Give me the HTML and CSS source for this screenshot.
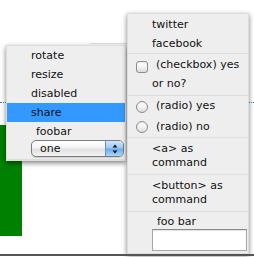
FILE: index.html
```html
<!DOCTYPE html>
<html>
<head>
<meta charset="utf-8">
<link rel="stylesheet" href="styles.css">
</head>
<body>
<div class="page">
  <div class="rule-top"></div>
  <div class="rule-dotted"></div>
  <div class="block"></div>
  <div class="rule-bottom"></div>
</div>

<ul class="menu menu-left">
  <li class="item">rotate</li>
  <li class="item">resize</li>
  <li class="item">disabled</li>
  <li class="item hover">share</li>
  <li class="item input-item sep">
    <label class="field-label">foobar</label>
    <div class="select">
      <span class="select-value">one</span>
      <span class="select-arrows">
        <svg width="6" height="10" viewBox="0 0 6 10"><path d="M3 0.5 L5.5 3.5 L0.5 3.5 Z" fill="#111"/><path d="M0.5 6.5 L5.5 6.5 L3 9.5 Z" fill="#111"/></svg>
      </span>
    </div>
  </li>
</ul>

<ul class="menu menu-right">
  <li class="item">twitter</li>
  <li class="item sep">facebook</li>
  <li class="item check-item sep"><span class="checkbox"></span>(checkbox) yes or no?</li>
  <li class="item radio-item"><span class="radio"></span>(radio) yes</li>
  <li class="item radio-item sep"><span class="radio"></span>(radio) no</li>
  <li class="item cmd-item sep">&lt;a&gt; as command</li>
  <li class="item cmd-item sep">&lt;button&gt; as command</li>
  <li class="item input-item">
    <label class="field-label">foo bar</label>
    <div class="textbox"></div>
  </li>
</ul>
</body>
</html>
```
FILE: styles.css
```css
html, body {
  margin: 0;
  padding: 0;
}
body {
  width: 254px;
  height: 257px;
  overflow: hidden;
  background: #fff;
  font-family: "DejaVu Sans", Verdana, sans-serif;
  font-size: 11px;
  color: #111;
  position: relative;
}
.page {
  display: flex;
  flex-direction: column;
  align-items: flex-start;
}
.rule-top {
  margin: 43px 0 0 90px;
  width: 40px;
  height: 1px;
  background: #e2e2e2;
}
.rule-dotted {
  margin-top: 58px;
  align-self: stretch;
  height: 0;
  border-top: 1px dotted #3d80b6;
}
.block {
  margin-top: 22px;
  width: 22px;
  height: 111px;
  background: #008000;
}
.rule-bottom {
  margin-top: 18px;
  align-self: stretch;
  height: 2px;
  background: #555;
  position: relative;
  z-index: 10;
}

.menu {
  position: absolute;
  margin: 0;
  padding: 0;
  list-style: none;
  box-sizing: border-box;
  background: #eee;
  border: 1px solid #ddd;
  box-shadow: 0 2px 5px rgba(0, 0, 0, 0.5);
}
.menu-left {
  left: 6px;
  top: 45px;
  width: 120px;
  z-index: 2;
}
.menu-right {
  left: 127px;
  top: 13px;
  width: 122px;
  padding-top: 1px;
  z-index: 3;
}
.item {
  padding: 2px 2px 2px 24px;
  line-height: 15px;
  white-space: normal;
}
.item.sep {
  border-bottom: 1px solid #ddd;
}
.item.hover {
  background: #39f;
}
.check-item {
  line-height: 18.5px;
}
.checkbox, .radio {
  display: inline-block;
  box-sizing: border-box;
  width: 12px;
  height: 12px;
  margin-left: -16px;
  margin-right: 8px;
  border: 1px solid #8c8c8c;
  background: linear-gradient(#ffffff, #f2f2f2 50%, #dcdcdc);
  box-shadow: inset 0 1px 1px rgba(0,0,0,0.08);
}
.checkbox {
  border-radius: 3px;
  vertical-align: -5px;
}
.radio {
  border-radius: 50%;
  vertical-align: -3.5px;
}
.radio-item {
  line-height: 16.5px;
}
.cmd-item {
  padding-top: 4px;
  padding-bottom: 4px;
  line-height: 14px;
}
.input-item {
  padding-right: 1px;
}
.field-label {
  display: block;
  padding-left: 5px;
  line-height: 15px;
}
.menu-left .input-item .field-label {
  margin-bottom: 1px;
}
.select {
  display: flex;
  box-sizing: border-box;
  height: 17px;
  border: 1px solid #7d7d7d;
  border-radius: 5px;
  overflow: hidden;
  background: linear-gradient(#ffffff, #f4f4f4 45%, #e2e2e2 55%, #f2f2f2);
  box-shadow: 0 1px 1px rgba(0,0,0,0.15);
}
.select-value {
  flex: 1;
  padding-left: 8px;
  line-height: 15px;
}
.select-arrows {
  width: 17px;
  display: flex;
  align-items: center;
  justify-content: center;
  border-left: 1px solid #6a8fb8;
  background: linear-gradient(#cfe6fc, #9ecaf5 45%, #6aaef0 55%, #a8d6fb);
}
.select-arrows svg {
  display: block;
}
.textbox {
  box-sizing: border-box;
  height: 22px;
  margin-top: 0;
  background: #fff;
  border: 1px solid #a8a8a8;
  border-top-color: #8a8a8a;
  box-shadow: inset 0 1px 1px rgba(0,0,0,0.12);
}
```
